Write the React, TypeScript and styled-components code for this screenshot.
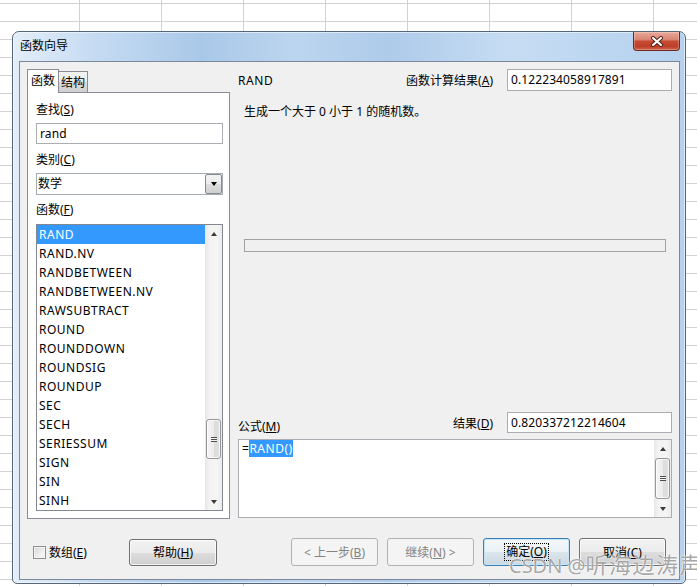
import React from "react";
import styled, { createGlobalStyle, css } from "styled-components";

const Global = createGlobalStyle`
  html, body { margin: 0; padding: 0; height: 100%; }
  body {
    background-color: #fff;
    background-image:
      linear-gradient(to right, #d2d2d2 1px, transparent 1px),
      linear-gradient(to bottom, #d2d2d2 1px, transparent 1px);
    background-size: 82px 18px;
    background-position: 79px 3px;
    font-family: "Noto Sans", "Noto Sans CJK SC", sans-serif;
    font-size: 12px;
    color: #000;
    overflow: hidden;
  }
`;

const Page = styled.div`
  position: relative;
  padding: 31px 0 0 12px;
`;

const Dialog = styled.div`
  width: 674px;
  height: 553px;
  box-sizing: border-box;
  border: 1px solid #56667a;
  border-radius: 7px 7px 5px 5px;
  background:
    linear-gradient(90deg, rgba(255,255,255,0.35) 0%, rgba(255,255,255,0) 12%, rgba(255,255,255,0) 100%),
    linear-gradient(90deg, #d3e4f6 0%, #c3d9f1 14%, #a9c8e8 28%, #bcd5ef 42%, #aecbea 56%, #c6dcf3 74%, #b5d1ee 100%);
  box-shadow: inset 0 0 0 1px rgba(255,255,255,0.55);
  display: flex;
  flex-direction: column;
`;

const TitleBar = styled.div`
  height: 29px;
  display: flex;
  justify-content: space-between;
  align-items: flex-start;
  padding: 0 5px 0 7px;
`;

const Title = styled.div`
  line-height: 28px;
  font-size: 12px;
  color: #000;
`;

const CloseButton = styled.div`
  width: 47px;
  height: 19px;
  box-sizing: border-box;
  border: 1px solid #6e2a22;
  border-top: none;
  border-radius: 0 0 4px 4px;
  background: linear-gradient(180deg, #e9aa9c 0%, #d98571 42%, #c74a33 52%, #bd3f29 80%, #d0654b 100%);
  box-shadow: inset 0 0 0 1px rgba(255,255,255,0.25);
  display: flex;
  align-items: center;
  justify-content: center;
`;

const Client = styled.div`
  flex: 1;
  margin: 0 5px 3px 6px;
  border: 1px solid #7a8899;
  background: #f0f0f0;
  padding: 7px 7px 13px 7px;
  display: flex;
  flex-direction: column;
`;

const MainRow = styled.div`
  height: 449px;
  display: flex;
  gap: 8px;
`;

const LeftCol = styled.div`
  width: 203px;
  display: flex;
  flex-direction: column;
`;

const TabStrip = styled.div`
  height: 23px;
  display: flex;
  align-items: flex-end;
`;

const Tab = styled.div<{ $active?: boolean }>`
  box-sizing: border-box;
  border: 1px solid #898c95;
  border-bottom: none;
  text-align: center;
  font-size: 12px;
  ${(p) =>
    p.$active
      ? css`
          width: 32px;
          height: 24px;
          margin-bottom: -1px;
          background: #fff;
          position: relative;
          z-index: 1;
          line-height: 22px;
        `
      : css`
          width: 29px;
          height: 21px;
          border-left: none;
          background: linear-gradient(180deg, #f2f2f2 0%, #ebebeb 50%, #dddddd 51%, #cfcfcf 100%);
          line-height: 22px;
        `}
`;

const TabPanel = styled.div`
  flex: 1;
  border: 1px solid #898c95;
  background: #fff;
  padding: 7px 6px 7px 8px;
  display: flex;
  flex-direction: column;
`;

const FieldLabel = styled.div<{ $gap: number }>`
  height: 20px;
  line-height: 20px;
  margin-top: ${(p) => p.$gap}px;
`;

const TextBox = styled.div<{ $h: number; $w?: number }>`
  box-sizing: border-box;
  height: ${(p) => p.$h}px;
  ${(p) => (p.$w ? `width: ${p.$w}px;` : "")}
  border: 1px solid #abadb3;
  background: #fff;
  padding: 0 2px 0 3px;
  line-height: ${(p) => p.$h - 2}px;
  letter-spacing: 0.1px;
  white-space: nowrap;
`;

const SearchBox = styled(TextBox)`
  margin-top: 3px;
`;

const SelectBox = styled.div`
  margin-top: 3px;
  height: 22px;
  box-sizing: border-box;
  border: 1px solid #a5acb5;
  background: #fff;
  display: flex;
  align-items: stretch;
`;

const SelectText = styled.div`
  flex: 1;
  padding-left: 1px;
  line-height: 20px;
`;

const DropButton = styled.div`
  width: 17px;
  box-sizing: border-box;
  border: 1px solid #8a8a8a;
  border-radius: 2px;
  background: linear-gradient(180deg, #f2f2f2 0%, #ebebeb 50%, #dddddd 51%, #cfcfcf 100%);
  display: flex;
  align-items: center;
  justify-content: center;
`;

const Arrow = styled.div<{ $dir: "up" | "down"; $color?: string }>`
  width: 0;
  height: 0;
  border-left: 3.5px solid transparent;
  border-right: 3.5px solid transparent;
  ${(p) =>
    p.$dir === "up"
      ? `border-bottom: 4px solid ${p.$color || "#3b3b3b"};`
      : `border-top: 4px solid ${p.$color || "#3b3b3b"};`}
`;

const ListBox = styled.div`
  margin-top: 4px;
  flex: 1;
  border: 1px solid #828790;
  display: flex;
  min-height: 0;
`;

const ListItems = styled.div`
  flex: 1;
  overflow: hidden;
`;

const ListItem = styled.div<{ $selected?: boolean }>`
  height: 19px;
  line-height: 19px;
  padding-left: 2px;
  letter-spacing: 0.5px;
  white-space: nowrap;
  ${(p) =>
    p.$selected &&
    css`
      background: #3399ff;
      color: #fff;
    `}
`;

const ScrollBar = styled.div`
  width: 17px;
  display: flex;
  flex-direction: column;
  background: linear-gradient(90deg, #e6e6e6 0%, #f3f3f3 25%, #f5f5f5 70%, #ebebeb 100%);
`;

const ScrollArrow = styled.div`
  height: 17px;
  display: flex;
  align-items: center;
  justify-content: center;
`;

const ScrollTrack = styled.div`
  flex: 1;
  min-height: 0;
`;

const Thumb = styled.div`
  box-sizing: border-box;
  margin-left: 1px;
  width: 15px;
  border: 1px solid #979797;
  border-radius: 3px;
  background: linear-gradient(90deg, #f5f5f5 0%, #ececec 50%, #dcdcdc 51%, #e0e0e0 100%);
  box-shadow: inset 0 0 0 1px rgba(255,255,255,0.7);
  display: flex;
  align-items: center;
  justify-content: center;
`;

const Grip = styled.div`
  width: 6px;
  height: 5px;
  background: repeating-linear-gradient(to bottom, #4e4e4e 0 1px, #f4f4f4 1px 2px);
`;

const RightCol = styled.div`
  flex: 1;
  display: flex;
  flex-direction: column;
`;

const TopRow = styled.div`
  height: 22px;
  display: flex;
  align-items: center;
`;

const FuncName = styled.div`
  flex: 1;
  letter-spacing: 0.6px;
`;

const SideLabel = styled.div`
  margin-right: 14px;
  white-space: nowrap;
`;

const Description = styled.div`
  margin: 13px 0 0 6px;
  line-height: 16px;
`;

const Meter = styled.div`
  margin: 119px 6px 0 6px;
  height: 13px;
  box-sizing: border-box;
  border: 1px solid #a2a2a2;
`;

const Spacer = styled.div`
  flex: 1;
`;

const FormulaRow = styled.div`
  height: 21px;
  display: flex;
  align-items: center;
`;

const FormulaLabel = styled.div`
  flex: 1;
  align-self: flex-end;
  line-height: 16px;
  margin-bottom: -2px;
`;

const FormulaBox = styled.div`
  margin-top: 6px;
  height: 79px;
  box-sizing: border-box;
  border: 1px solid #abadb3;
  background: #fff;
  display: flex;
`;

const FormulaText = styled.div`
  flex: 1;
  padding: 1px 3px;
  line-height: 15px;
  letter-spacing: 0.5px;
`;

const Selected = styled.span`
  background: #3399ff;
  color: #fff;
`;

const BottomRow = styled.div`
  margin-top: 20px;
  height: 28px;
  display: flex;
  align-items: center;
  padding: 0 6px;
`;

const CheckWrap = styled.div`
  width: 96px;
  display: flex;
  align-items: center;
  gap: 3px;
`;

const CheckBox = styled.div`
  width: 13px;
  height: 13px;
  box-sizing: border-box;
  border: 1px solid #8e8f8f;
  background: linear-gradient(135deg, #d4d4d4 0%, #efefef 60%, #f7f7f7 100%);
  box-shadow: inset 0 0 0 1px #f4f4f4;
`;

const ButtonGroup = styled.div`
  margin-left: auto;
  display: flex;
  gap: 9px;
`;

const Button = styled.div<{ $variant?: "disabled" | "default"; $w?: number; $h?: number }>`
  width: ${(p) => p.$w || 87}px;
  height: ${(p) => p.$h || 28}px;
  box-sizing: border-box;
  border: 1px solid #707070;
  border-radius: 3px;
  background: linear-gradient(180deg, #f2f2f2 0%, #ebebeb 50%, #dddddd 51%, #cfcfcf 100%);
  box-shadow: inset 0 0 0 1px rgba(255,255,255,0.75);
  display: flex;
  align-items: center;
  justify-content: center;
  white-space: nowrap;
  ${(p) =>
    p.$variant === "disabled" &&
    css`
      border-color: #adb2b5;
      background: #f4f4f4;
      box-shadow: none;
      color: #838383;
    `}
  ${(p) =>
    p.$variant === "default" &&
    css`
      border-color: #3c7fb1;
      background: linear-gradient(180deg, #f4f8fb 0%, #eaf1f6 50%, #dbe5ec 51%, #ccd8e1 100%);
      box-shadow: inset 0 0 0 1px #c4e5f6;
    `}
`;

const FocusRing = styled.span`
  border: 1px dotted #000;
  padding: 0 1px;
  line-height: 16px;
`;

const Watermark = styled.div`
  position: absolute;
  left: 509px;
  top: 551px;
  font-size: 20px;
  line-height: 26px;
  color: rgba(128, 128, 128, 0.7);
  text-shadow: 0 0 1px #fff, 0 0 2px #fff;
  white-space: nowrap;
  pointer-events: none;
`;

const WatermarkCjk = styled.span`
  font-size: 22px;
  letter-spacing: 1.5px;
`;

const functions = [
  "RAND",
  "RAND.NV",
  "RANDBETWEEN",
  "RANDBETWEEN.NV",
  "RAWSUBTRACT",
  "ROUND",
  "ROUNDDOWN",
  "ROUNDSIG",
  "ROUNDUP",
  "SEC",
  "SECH",
  "SERIESSUM",
  "SIGN",
  "SIN",
  "SINH",
];

function Scroll({ thumbTop, thumbHeight }: { thumbTop: number; thumbHeight: number }) {
  return (
    <ScrollBar>
      <ScrollArrow>
        <Arrow $dir="up" />
      </ScrollArrow>
      <ScrollTrack>
        <Thumb style={{ marginTop: thumbTop, height: thumbHeight }}>
          <Grip />
        </Thumb>
      </ScrollTrack>
      <ScrollArrow>
        <Arrow $dir="down" />
      </ScrollArrow>
    </ScrollBar>
  );
}

export default function App() {
  return (
    <>
      <Global />
      <Page>
        <Dialog>
          <TitleBar>
            <Title>函数向导</Title>
            <CloseButton>
              <svg width="14" height="11" viewBox="0 0 14 11">
                <path d="M3 2 L11 9 M11 2 L3 9" stroke="#4a1c16" strokeWidth="4" strokeLinecap="round" />
                <path d="M3 2 L11 9 M11 2 L3 9" stroke="#ffffff" strokeWidth="2.2" strokeLinecap="round" />
              </svg>
            </CloseButton>
          </TitleBar>
          <Client>
            <MainRow>
              <LeftCol>
                <TabStrip>
                  <Tab $active>函数</Tab>
                  <Tab>结构</Tab>
                </TabStrip>
                <TabPanel>
                  <FieldLabel $gap={0}>
                    查找(<u>S</u>)
                  </FieldLabel>
                  <SearchBox $h={21}>rand</SearchBox>
                  <FieldLabel $gap={6}>
                    类别(<u>C</u>)
                  </FieldLabel>
                  <SelectBox>
                    <SelectText>数学</SelectText>
                    <DropButton>
                      <Arrow $dir="down" $color="#000" />
                    </DropButton>
                  </SelectBox>
                  <FieldLabel $gap={5}>
                    函数(<u>F</u>)
                  </FieldLabel>
                  <ListBox>
                    <ListItems>
                      {functions.map((f, i) => (
                        <ListItem key={f} $selected={i === 0}>
                          {f}
                        </ListItem>
                      ))}
                    </ListItems>
                    <Scroll thumbTop={177} thumbHeight={40} />
                  </ListBox>
                </TabPanel>
              </LeftCol>
              <RightCol>
                <TopRow>
                  <FuncName>RAND</FuncName>
                  <SideLabel>
                    函数计算结果(<u>A</u>)
                  </SideLabel>
                  <TextBox $h={22} $w={165}>0.122234058917891</TextBox>
                </TopRow>
                <Description>生成一个大于 0 小于 1 的随机数。</Description>
                <Meter />
                <Spacer />
                <FormulaRow>
                  <FormulaLabel>
                    公式(<u>M</u>)
                  </FormulaLabel>
                  <SideLabel>
                    结果(<u>D</u>)
                  </SideLabel>
                  <TextBox $h={21} $w={165}>0.820337212214604</TextBox>
                </FormulaRow>
                <FormulaBox>
                  <FormulaText>
                    =<Selected>RAND()</Selected>
                  </FormulaText>
                  <Scroll thumbTop={1} thumbHeight={41} />
                </FormulaBox>
              </RightCol>
            </MainRow>
            <BottomRow>
              <CheckWrap>
                <CheckBox />
                <span>
                  数组(<u>E</u>)
                </span>
              </CheckWrap>
              <Button $w={88} $h={27}>
                帮助(<u>H</u>)
              </Button>
              <ButtonGroup>
                <Button $variant="disabled">
                  &lt; 上一步(<u>B</u>)
                </Button>
                <Button $variant="disabled">
                  继续(<u>N</u>) &gt;
                </Button>
                <Button $variant="default">
                  <FocusRing>
                    确定(<u>O</u>)
                  </FocusRing>
                </Button>
                <Button>
                  取消(<u>C</u>)
                </Button>
              </ButtonGroup>
            </BottomRow>
          </Client>
        </Dialog>
        <Watermark>
          CSDN @<WatermarkCjk>听海边涛声</WatermarkCjk>
        </Watermark>
      </Page>
    </>
  );
}
